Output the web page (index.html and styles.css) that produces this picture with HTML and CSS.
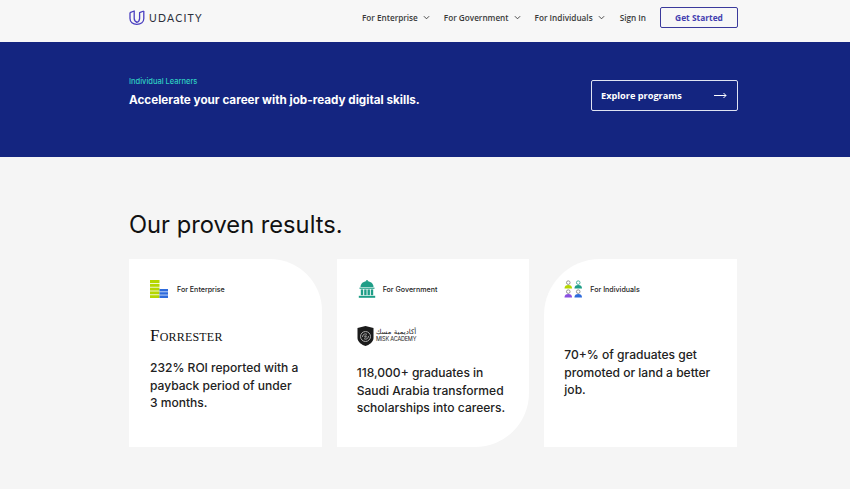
FILE: index.html
```html
<!DOCTYPE html>
<html lang="en">
<head>
  <meta charset="UTF-8" />
  <title>Udacity</title>
  <link rel="stylesheet" href="styles.css">
</head>
<body>

  <header class="topbar">
    <div class="wrap topbar-row">
      <a class="logo" href="#">
        <svg class="logo-mark" viewBox="0 0 16 15" width="16" height="15">
          <path d="M1 2.600 V8.500 C1 12 3.800 14.300 7.800 14.300 C12 14.300 14.800 12 14.800 8.500 V1" fill="none" stroke="#4a3fc0" stroke-width="1.300"/>
          <path d="M1 2.600 L5.200 1 V8.500 C5.200 10.500 6.300 11.700 8.200 12.400" fill="none" stroke="#4a3fc0" stroke-width="1.300" stroke-linejoin="round"/>
          <path d="M14.800 1 L10.600 2.600 V8.500 C10.600 10.600 9.400 11.900 7.400 12.500" fill="none" stroke="#4a3fc0" stroke-width="1.300" stroke-linejoin="round"/>
        </svg>
        <span class="logo-text">UDACITY</span>
      </a>
      <nav class="nav">
        <a class="nav-link" href="#">For Enterprise <svg class="chev" viewBox="0 0 8 5" width="7" height="5"><path d="M1 1 L4 4 L7 1" fill="none" stroke="#333" stroke-width="1"/></svg></a>
        <a class="nav-link" href="#">For Government <svg class="chev" viewBox="0 0 8 5" width="7" height="5"><path d="M1 1 L4 4 L7 1" fill="none" stroke="#333" stroke-width="1"/></svg></a>
        <a class="nav-link" href="#">For Individuals <svg class="chev" viewBox="0 0 8 5" width="7" height="5"><path d="M1 1 L4 4 L7 1" fill="none" stroke="#333" stroke-width="1"/></svg></a>
        <a class="nav-link nav-signin" href="#">Sign In</a>
        <a class="btn-start" href="#">Get Started</a>
      </nav>
    </div>
  </header>

  <section class="hero">
    <div class="wrap hero-row">
      <div class="hero-copy">
        <p class="hero-label">Individual Learners</p>
        <h2 class="hero-title">Accelerate your career with job-ready digital skills.</h2>
      </div>
      <a class="btn-explore" href="#">
        <span>Explore programs</span>
        <svg viewBox="0 0 13 7" width="13" height="7"><path d="M0 3.500 H12 M9.500 1 L12 3.500 L9.500 6" fill="none" stroke="#fff" stroke-width="1"/></svg>
      </a>
    </div>
  </section>

  <main class="wrap results">
    <h1 class="results-title">Our proven results.</h1>
    <div class="cards">

      <div class="card card-one">
        <div class="card-head">
          <svg class="card-icon" viewBox="0 0 18 18" width="18" height="18">
            <rect x="0" y="0" width="9.500" height="3" fill="#b5d600"/>
            <rect x="0" y="3.800" width="9.500" height="3" fill="#b5d600"/>
            <rect x="0" y="7.600" width="9.500" height="3" fill="#b5d600"/>
            <rect x="0" y="11.400" width="9.500" height="3" fill="#b5d600"/>
            <rect x="0" y="15.200" width="9.500" height="2.800" fill="#b5d600"/>
            <rect x="9.500" y="9" width="8.500" height="2.500" fill="#2e6bdc"/>
            <rect x="9.500" y="12.200" width="8.500" height="2.500" fill="#2e6bdc"/>
            <rect x="9.500" y="15.400" width="8.500" height="2.600" fill="#2e6bdc"/>
          </svg>
          <span class="card-tag">For Enterprise</span>
        </div>
        <div class="card-brand"><span class="forrester">Forrester</span></div>
        <p class="card-text">232% ROI reported with a payback period of under 3&nbsp;months.</p>
      </div>

      <div class="card card-two">
        <div class="card-head">
          <svg class="card-icon" viewBox="0 0 18 18" width="18" height="18">
            <rect x="8.300" y="0" width="1.400" height="2" fill="#1f9e87"/>
            <path d="M2.500 7 C2.500 3.500 5.300 1.200 9 1.200 C12.700 1.200 15.500 3.500 15.500 7 Z" fill="#1f9e87"/>
            <rect x="1.500" y="7.600" width="15" height="1.200" fill="#1f9e87"/>
            <rect x="2.800" y="9.400" width="2.400" height="5.800" fill="#1f9e87"/>
            <rect x="6.200" y="9.400" width="2.400" height="5.800" fill="#1f9e87"/>
            <rect x="9.500" y="9.400" width="2.400" height="5.800" fill="#1f9e87"/>
            <rect x="12.800" y="9.400" width="2.400" height="5.800" fill="#1f9e87"/>
            <rect x="0.800" y="15.800" width="16.400" height="2" fill="#1f9e87"/>
          </svg>
          <span class="card-tag">For Government</span>
        </div>
        <div class="card-brand card-brand-misk">
          <svg class="misk-mark" viewBox="0 0 17 20" width="17" height="20">
            <path d="M0.500 2 L8.500 0 L16.500 2 V12 C16.500 16 12 19 8.500 20 C5 19 0.500 16 0.500 12 Z" fill="#1b1b1b"/>
            <circle cx="8.500" cy="10.500" r="5" fill="none" stroke="#aaa" stroke-width="1"/>
            <path d="M5.500 11 C5.500 8.500 8 7 10 8.500 M11.500 10 C11.500 12.500 9 14 7 12.500" fill="none" stroke="#ccc" stroke-width="0.800"/>
            <circle cx="8.500" cy="10.500" r="1.300" fill="#888"/>
          </svg>
          <span class="misk-text"><span class="misk-ar">أكاديمية مسك</span><span class="misk-en">MISK ACADEMY</span></span>
        </div>
        <p class="card-text">118,000+ graduates in Saudi Arabia transformed scholarships into careers.</p>
      </div>

      <div class="card card-three">
        <div class="card-head">
          <svg class="card-icon" viewBox="0 0 20 19" width="19" height="18">
            <circle cx="4.500" cy="2.800" r="1.900" fill="#fff" stroke="#777" stroke-width="0.800"/>
            <path d="M0.500 9 C0.500 6.500 2 5.300 4.500 5.300 C7 5.300 8.500 6.500 8.500 9 Z" fill="#b5d600"/>
            <circle cx="15" cy="2.800" r="1.900" fill="#fff" stroke="#1f9e87" stroke-width="0.800"/>
            <path d="M11 9 C11 6.500 12.500 5.300 15 5.300 C17.500 5.300 19 6.500 19 9 Z" fill="#1f9e87"/>
            <circle cx="4.500" cy="12.300" r="1.900" fill="#fff" stroke="#777" stroke-width="0.800"/>
            <path d="M0.500 18.500 C0.500 16 2 14.800 4.500 14.800 C7 14.800 8.500 16 8.500 18.500 Z" fill="#8a4fe0"/>
            <circle cx="15" cy="12.300" r="1.900" fill="#fff" stroke="#777" stroke-width="0.800"/>
            <path d="M11 18.500 C11 16 12.500 14.800 15 14.800 C17.500 14.800 19 16 19 18.500 Z" fill="#2e6bdc"/>
          </svg>
          <span class="card-tag">For Individuals</span>
        </div>
        <p class="card-text card-text-alone">70+% of graduates get promoted or land a better job.</p>
      </div>

    </div>
  </main>

</body>
</html>
```

FILE: styles.css
```css
body {
  margin: 0;
  background-color: #f5f5f5;
  color: #1c1c1c;
  font-family: 'Inter', sans-serif;
}

a {
  text-decoration: none;
}

.wrap {
  width: 609px;
  margin-left: 129px;
}

.topbar {
  height: 42px;
  background: #f7f7f7;
}

.topbar-row {
  height: 35px;
  display: flex;
  align-items: center;
  justify-content: space-between;
}

.logo {
  display: flex;
  align-items: center;
  gap: 4px;
}

.logo-text {
  font-family: 'Lato', sans-serif;
  font-size: 10.500px;
  letter-spacing: 1.250px;
  color: #2b2f3a;
}

.nav {
  display: flex;
  align-items: center;
}

.nav-link {
  display: flex;
  align-items: center;
  gap: 5px;
  margin-right: 14px;
  font-family: 'Open Sans', sans-serif;
  font-size: 8.200px;
  font-weight: 600;
  color: #3a3a3a;
  white-space: nowrap;
}

.nav-signin {
  margin-left: 1px;
  margin-right: 14px;
}

.btn-start {
  width: 76px;
  height: 19px;
  line-height: 19px;
  border: 1px solid #3b3a9c;
  border-radius: 2px;
  text-align: center;
  font-family: 'Open Sans', sans-serif;
  font-size: 8.400px;
  font-weight: 700;
  color: #4340b0;
}

.hero {
  height: 115px;
  background: #142580;
  color: #fff;
}

.hero-row {
  height: 107px;
  display: flex;
  align-items: center;
  justify-content: space-between;
}

.hero-copy {
  padding-bottom: 8px;
}

.hero-label {
  margin: 0 0 7px;
  font-size: 7.500px;
  font-weight: 500;
  color: #2fd0c0;
}

.hero-title {
  margin: 0;
  font-size: 11.700px;
  font-weight: 700;
  white-space: nowrap;
}

.btn-explore {
  width: 126px;
  height: 29px;
  padding: 0 10px 0 9px;
  display: flex;
  align-items: center;
  justify-content: space-between;
  border: 1px solid #dfe3f2;
  border-radius: 2px;
  font-family: 'Open Sans', sans-serif;
  font-size: 9.200px;
  font-weight: 700;
  color: #fff;
}

.results {
  padding-top: 50px;
}

.results-title {
  margin: 0 0 17px;
  font-size: 23.700px;
  line-height: 35px;
  font-weight: 400;
  color: #111;
}

.cards {
  display: grid;
  grid-template-columns: repeat(3, 1fr);
  gap: 15px;
  margin-right: 1px;
}

.card {
  height: 188px;
  padding: 21px 20px 0;
  box-sizing: border-box;
  background: #fff;
}

.card-one {
  padding-left: 21px;
  border-top-right-radius: 52px;
}

.card-two {
  border-bottom-right-radius: 54px;
}

.card-three {
  border-top-left-radius: 56px;
}

.card-head {
  display: flex;
  align-items: center;
  gap: 9px;
}

.card-two .card-head {
  gap: 7px;
}

.card-three .card-head {
  gap: 7px;
}

.card-icon {
  display: block;
}

.card-two .card-icon {
  margin-left: 1px;
}

.card-tag {
  font-size: 7.100px;
  font-weight: 500;
  color: #222;
}

.card-brand {
  height: 22px;
  margin-top: 27px;
  display: flex;
  align-items: center;
  gap: 2px;
}

.forrester {
  font-family: 'Liberation Serif', serif;
  font-size: 17px;
  font-variant: small-caps;
  letter-spacing: 0.200px;
  color: #111;
}

.misk-text {
  display: flex;
  flex-direction: column;
  align-items: flex-end;
  line-height: 7.500px;
  color: #222;
}

.misk-ar {
  font-family: 'DejaVu Sans', sans-serif;
  font-size: 7px;
}

.misk-en {
  font-size: 5.500px;
  letter-spacing: -0.200px;
}

.card-text {
  margin: 12px 0 0;
  font-size: 12.050px;
  line-height: 17.500px;
  font-weight: 500;
  color: #222;
}

.card-brand-misk + .card-text {
  margin-top: 17px;
}

.card-text-alone {
  margin-top: 48px;
}
```
